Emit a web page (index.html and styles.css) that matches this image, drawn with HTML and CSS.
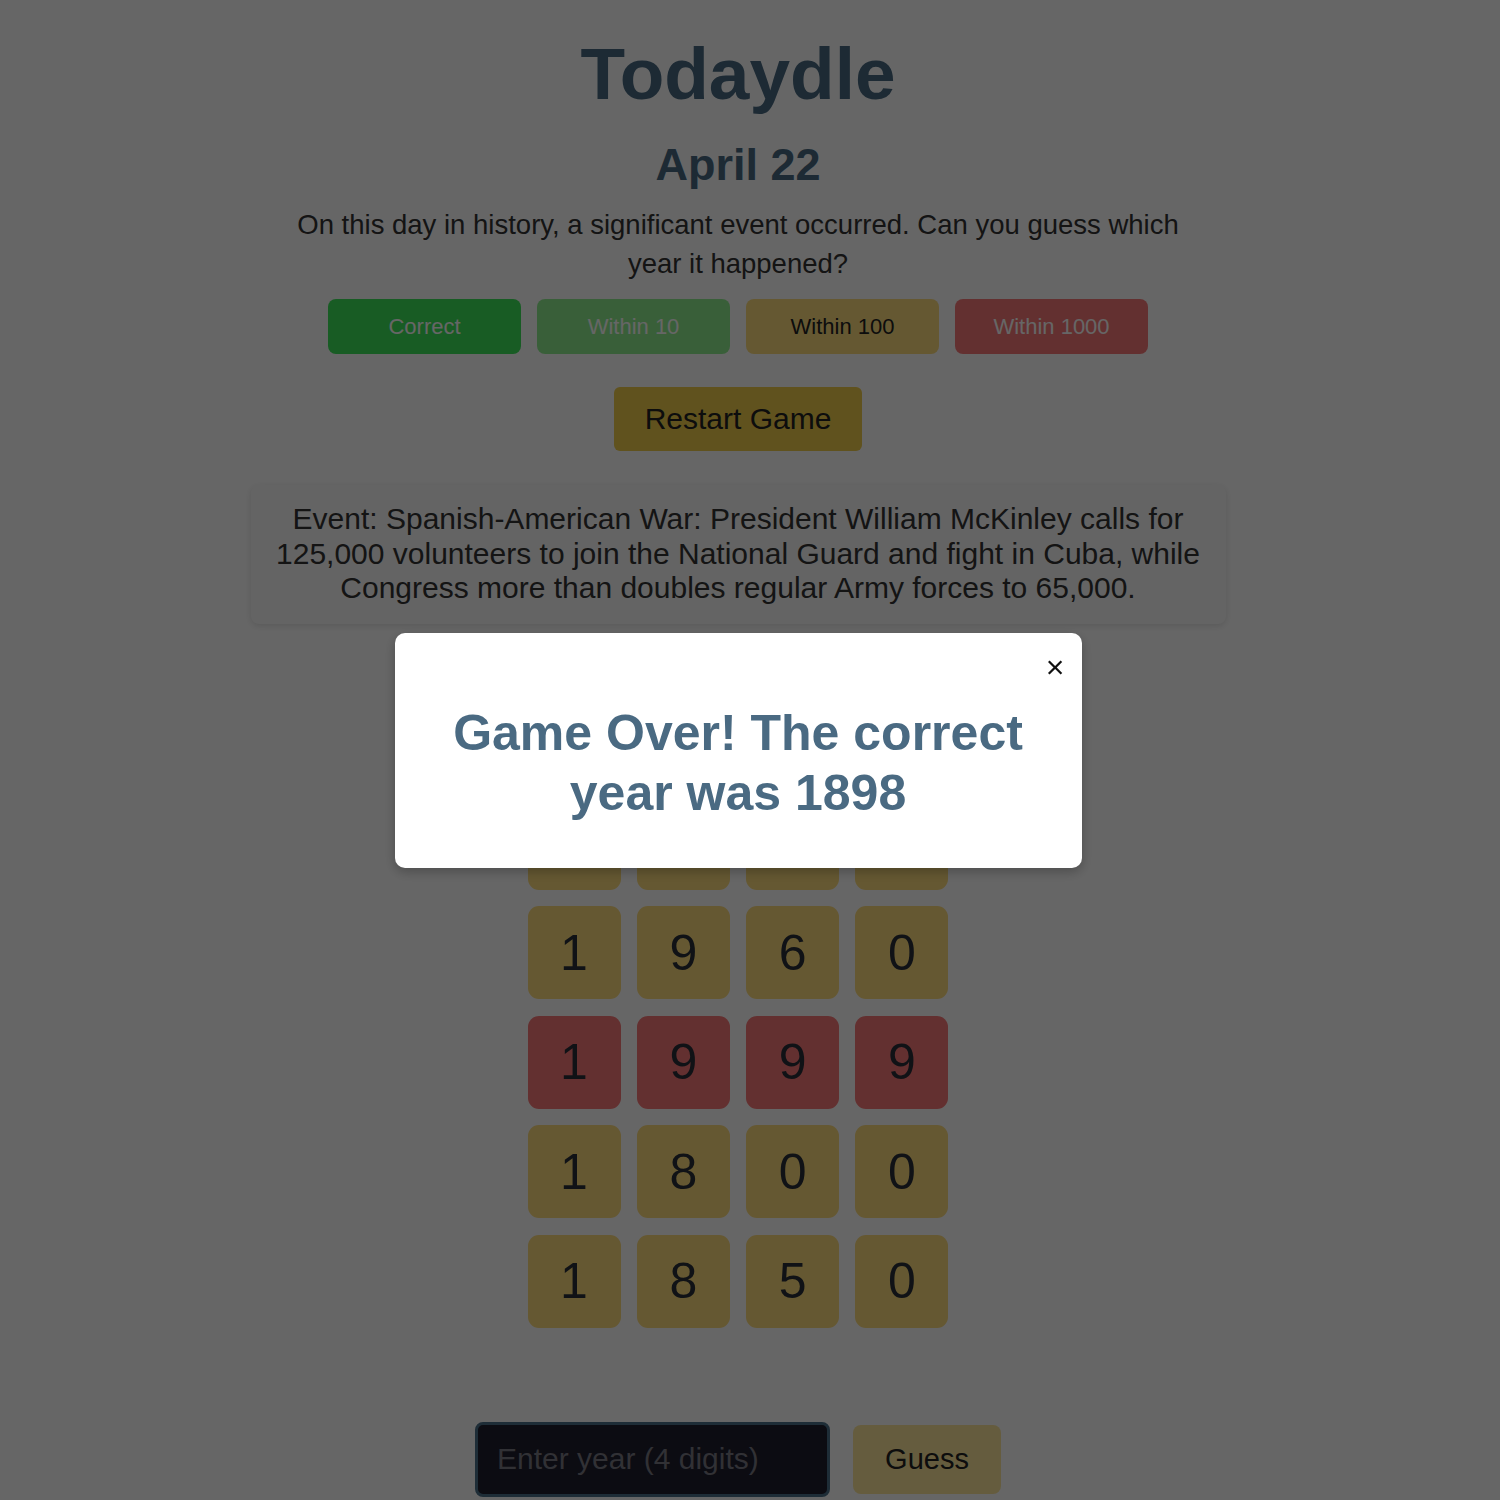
FILE: index.html
```html
<!DOCTYPE html>
<html lang="en">
<head>
<meta charset="utf-8">
<title>Todaydle</title>
<link rel="stylesheet" href="styles.css">
</head>
<body>
<div class="app">
  <h1 class="title">Todaydle</h1>
  <h2 class="date">April 22</h2>
  <p class="intro">On this day in history, a significant event occurred. Can you guess which year it happened?</p>
  <div class="legend">
    <div class="legend-item correct">Correct</div>
    <div class="legend-item within10">Within 10</div>
    <div class="legend-item within100">Within 100</div>
    <div class="legend-item within1000">Within 1000</div>
  </div>
  <button class="restart">Restart Game</button>
  <div class="event">Event: Spanish-American War: President William McKinley calls for 125,000 volunteers to join the National Guard and fight in Cuba, while Congress more than doubles regular Army forces to 65,000.</div>
  <div class="board">
    <div class="tile near">1</div><div class="tile near">9</div><div class="tile near">0</div><div class="tile near">0</div>
    <div class="tile near">1</div><div class="tile near">9</div><div class="tile near">6</div><div class="tile near">0</div>
    <div class="tile far">1</div><div class="tile far">9</div><div class="tile far">9</div><div class="tile far">9</div>
    <div class="tile near">1</div><div class="tile near">8</div><div class="tile near">0</div><div class="tile near">0</div>
    <div class="tile near">1</div><div class="tile near">8</div><div class="tile near">5</div><div class="tile near">0</div>
  </div>
  <div class="guess-row">
    <input class="year-input" type="text" placeholder="Enter year (4 digits)">
    <button class="guess-btn">Guess</button>
  </div>
</div>
<div class="overlay">
  <div class="modal">
    <button class="close">&times;</button>
    <h2 class="modal-title">Game Over! The correct year was 1898</h2>
  </div>
</div>
</body>
</html>
```
FILE: styles.css
```css
* { box-sizing: border-box; }
html, body { margin: 0; padding: 0; }
body {
  background: #ffffff;
  font-family: "Liberation Sans", Arial, sans-serif;
  color: #333333;
}
.app {
  display: flex;
  flex-direction: column;
  align-items: center;
  padding-right: 24px;
}
.title {
  margin: 30px 0 0;
  font-size: 73px;
  line-height: 87px;
  font-weight: 700;
  color: #4a6a82;
}
.date {
  margin: 21px 0 0;
  font-size: 45px;
  line-height: 54px;
  font-weight: 700;
  color: #4a6a82;
}
.intro {
  margin: 14px 0 0;
  max-width: 920px;
  text-align: center;
  font-size: 27.5px;
  line-height: 38.5px;
  color: #333333;
}
.legend {
  margin-top: 16px;
  display: flex;
  gap: 16px;
}
.legend-item {
  width: 193px;
  height: 55px;
  border-radius: 8px;
  display: flex;
  align-items: center;
  justify-content: center;
  font-size: 22px;
  color: #ffffff;
}
.correct { background: #3ce65a; }
.within10 { background: #90ee90; }
.within100 { background: #fcdc7d; color: #222222; }
.within1000 { background: #f87878; }
.restart {
  margin-top: 33px;
  width: 248px;
  height: 64px;
  border: none;
  border-radius: 6px;
  background: #f0cd4b;
  color: #222222;
  font-family: inherit;
  font-size: 30px;
  padding: 0;
}
.event {
  margin-top: 34px;
  width: 975px;
  padding: 17px 20px 18px;
  background: #fafafa;
  border-radius: 8px;
  box-shadow: 0 2px 6px rgba(0, 0, 0, 0.12);
  text-align: center;
  font-size: 30px;
  line-height: 34.5px;
  color: #333333;
}
.board {
  margin-top: 173px;
  display: grid;
  grid-template-columns: repeat(4, 93px);
  grid-auto-rows: 93px;
  column-gap: 16.33px;
  row-gap: 16.5px;
}
.tile {
  border-radius: 11px;
  display: flex;
  align-items: center;
  justify-content: center;
  font-size: 50px;
  color: #2a2f38;
}
.tile.near { background: #fcdc7d; }
.tile.far { background: #f87878; }
.guess-row {
  margin-top: 94px;
  display: flex;
  align-items: center;
  gap: 23px;
}
.year-input {
  width: 355px;
  height: 75px;
  border: 3px solid #4b7089;
  border-radius: 8px;
  background: #1e1e2d;
  color: #ffffff;
  padding: 0 19px;
  font-family: inherit;
  font-size: 30px;
  outline: none;
}
.year-input::placeholder { color: #7a7a84; }
.guess-btn {
  width: 148px;
  height: 69px;
  border: none;
  border-radius: 8px;
  background: #fce69b;
  color: #222222;
  font-family: inherit;
  font-size: 29px;
  padding: 0;
}
.overlay {
  position: fixed;
  inset: 0;
  background: rgba(0, 0, 0, 0.6);
  display: flex;
  align-items: center;
  justify-content: center;
  padding-right: 24px;
}
.modal {
  position: relative;
  width: 687px;
  padding: 70px 40px 45px;
  background: #ffffff;
  border-radius: 10px;
  box-shadow: 0 4px 12px rgba(0, 0, 0, 0.25);
}
.close {
  position: absolute;
  top: 18px;
  right: 17px;
  border: none;
  background: none;
  padding: 0;
  font-family: inherit;
  font-size: 32px;
  line-height: 1;
  color: #111111;
}
.modal-title {
  margin: 0;
  text-align: center;
  font-size: 50px;
  line-height: 60px;
  font-weight: 700;
  color: #4a6a82;
}
```
